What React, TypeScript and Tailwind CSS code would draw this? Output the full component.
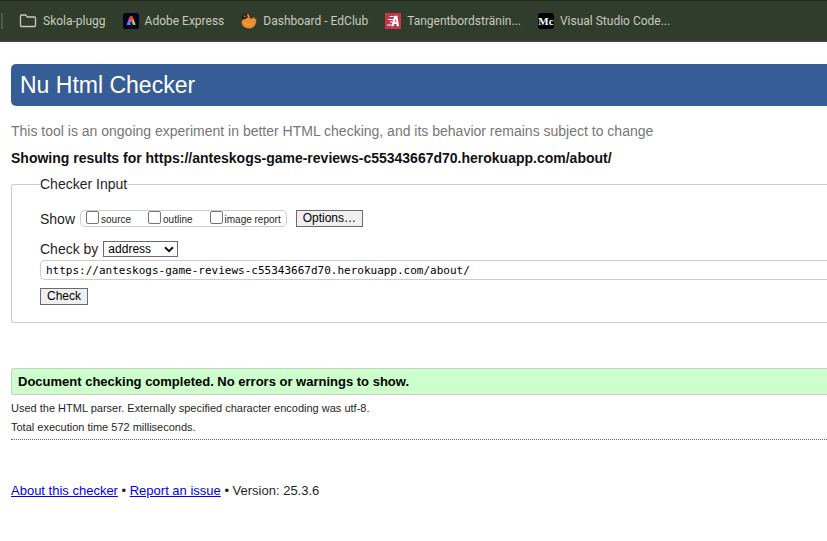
import type { ReactNode } from "react";

const barFont = "font-['Roboto','Noto_Sans',sans-serif]";
const pageFont = "font-['Liberation_Sans',Arial,sans-serif]";

function FolderIcon() {
  return (
    <svg width="18" height="16" viewBox="0 0 18 16" fill="none" aria-hidden="true">
      <path
        d="M1.5 3c0-.7.4-1 1-1h4l2 2h7c.6 0 1 .4 1 1v7.500c0 .6-.4 1-1 1h-13c-.6 0-1-.4-1-1z"
        stroke="#c9cbbd"
        strokeWidth="1.300"
      />
    </svg>
  );
}

function AdobeIcon() {
  return (
    <svg width="16" height="16" viewBox="0 0 16 16" aria-hidden="true">
      <defs>
        <linearGradient id="adobeRainbow" x1="0" y1="1" x2="1" y2="0.6">
          <stop offset="0" stopColor="#b45cff" />
          <stop offset="0.35" stopColor="#5a7bff" />
          <stop offset="0.65" stopColor="#3fd07a" />
          <stop offset="0.85" stopColor="#ffd23a" />
          <stop offset="1" stopColor="#ff8a1f" />
        </linearGradient>
        <linearGradient id="adobeTop" x1="0" y1="0" x2="0" y2="1">
          <stop offset="0" stopColor="#ff2a1f" />
          <stop offset="0.4" stopColor="#ff3a50" />
          <stop offset="0.8" stopColor="#ff3a90" stopOpacity="0" />
        </linearGradient>
      </defs>
      <rect width="16" height="16" rx="2.5" fill="#02031c" />
      <path
        d="M6.600 4c.2-.6.6-.8 1.100-.8h.9c.5 0 .9.3 1.100.8l2.700 7c.2.6-.1 1.100-.7 1.100h-1.100c-.5 0-.8-.3-1-.7L8.200 8l-1.200 2.600h1l-.5 1.500H4.600c-.6 0-.9-.5-.7-1.100z"
        fill="url(#adobeRainbow)"
      />
      <path
        d="M6.600 4c.2-.6.6-.8 1.100-.8h.9c.5 0 .9.3 1.100.8l1.800 4.600-1.900 1L8.200 8l-1.200 2.600-2.300-1.700z"
        fill="url(#adobeTop)"
      />
    </svg>
  );
}

function BirdIcon() {
  return (
    <svg width="16" height="16" viewBox="0 0 16 16" aria-hidden="true">
      <path
        d="M2 3 5.500 1c2 0 3 1.200 3 2.800.1 1.500 1.200 2.200 2.500 1.800 1-.3 1.600-.9 2-1.600.7.700.9 1.300.7 2 .8-.2 1.300-.1 1.800.3-.2.8-.5 1.300-1 1.700.5.300.9.600 1.100 1-.8.500-.8 1.600-1.300 2.600-.9 2.300-2.900 3.900-5.600 3.900C4.400 15.500 1 13.300.7 9.800.6 8.200 1.300 7 2.300 6.200z"
        fill="#f08a2c"
      />
      <path d="M2.500 8.500c2 2.700 6 3.200 10 1-1.500 3.600-8.500 4-10-1z" fill="#fdac44" />
      <path d="M.2 4.800 2.200 1.600 5.800.8l1 3.600-3.800 2z" fill="#1d1c16" />
      <path d="M2.800 2.600h1.700V4H2.800z" fill="#e9892d" />
    </svg>
  );
}

function TypingIcon() {
  return (
    <svg width="16" height="16" viewBox="0 0 16 16" aria-hidden="true">
      <rect width="16" height="16" fill="#c5344b" />
      <path d="M4.500 3.500h4M3 6.500h5M5 9h2.500M2 12h4.500" stroke="#fff" strokeWidth="1" />
      <path
        d="M6.300 13.300 9.300 2.800h3l1.800 10.500h-2.400l-.3-2.300H9.300l-.7 2.300zm3.500-4.200h1.400l-.4-3.500z"
        fill="#fff"
        fillRule="evenodd"
      />
    </svg>
  );
}

function MonogramIcon() {
  return (
    <span
      aria-hidden="true"
      className="flex h-4 w-4 items-center justify-center rounded-[3px] bg-black font-['Liberation_Serif',serif] text-[11px] leading-4 font-bold text-white"
    >
      Mc
    </span>
  );
}

function Bookmark({ icon, children }: { icon: ReactNode; children: ReactNode }) {
  return (
    <a href="#" className="flex shrink-0 items-center gap-[6px]">
      {icon}
      <span>{children}</span>
    </a>
  );
}

function ShowOption({ id, label }: { id: string; label: string }) {
  return (
    <span className="flex items-start gap-[2px]">
      <input
        id={id}
        type="checkbox"
        className="h-[13px] w-[13px] appearance-none rounded-[2px] border border-[#767676] bg-white checked:bg-[#0075ff]"
      />
      <label htmlFor={id} className="pt-[2px] text-[10px] leading-[14px]">
        {label}
      </label>
    </span>
  );
}

const buttonStyle =
  "h-[17px] border border-[#6b6b6b] bg-[#efefef] px-[6px] text-[12px] leading-[15px] text-black";

export default function App() {
  return (
    <div className={`min-h-screen overflow-hidden bg-white text-[#1f1f1f] ${pageFont}`}>
      <nav
        aria-label="Bookmarks"
        className={`flex h-[42px] items-center border-t border-b border-t-[#1f2c1c] border-b-[#4a4f49] bg-[#303d2d] text-[12px] text-[#c9cbbd] ${barFont}`}
      >
        <span className="mr-4 ml-px h-4 w-[2px] bg-[#4a5a45]" />
        <div className="flex items-center gap-[17px]">
          <Bookmark icon={<FolderIcon />}>Skola-plugg</Bookmark>
          <Bookmark icon={<AdobeIcon />}>Adobe Express</Bookmark>
          <Bookmark icon={<BirdIcon />}>Dashboard - EdClub</Bookmark>
          <Bookmark icon={<TypingIcon />}>Tangentbordstränin...</Bookmark>
          <Bookmark icon={<MonogramIcon />}>Visual Studio Code...</Bookmark>
        </div>
      </nav>

      <main className="pt-[22px] pl-[11px]">
        <h1 className="rounded-l-[5px] bg-[#365d95] px-[9px] text-[23px] leading-[42px] text-white">
          Nu Html Checker
        </h1>
        <p className="mt-4 text-[14px] leading-[18px] text-[#767676]">
          This tool is an ongoing experiment in better HTML checking, and its behavior remains subject to change
        </p>
        <h2 className="mt-[9px] text-[14px] leading-[18px] font-bold text-[#111]">
          Showing results for https://anteskogs-game-reviews-c55343667d70.herokuapp.com/about/
        </h2>

        <form className="mt-[9px]" onSubmit={(event) => event.preventDefault()}>
          <fieldset className="rounded-l-[3px] border border-r-0 border-[#ccc] pb-[17px] pl-7">
            <legend className="text-[14px] leading-4">Checker Input</legend>

            <div className="mt-[18px] flex items-center">
              <span className="text-[14px] leading-4">Show</span>
              <div className="ml-[5px] flex h-[17px] items-start gap-[17px] rounded-[5px] border border-[#ccc] px-[5px]">
                <ShowOption id="source" label="source" />
                <ShowOption id="outline" label="outline" />
                <ShowOption id="image-report" label="image report" />
              </div>
              <button type="button" className={`ml-[9px] ${buttonStyle}`}>
                Options…
              </button>
            </div>

            <div className="mt-[14px] flex items-center">
              <label htmlFor="method" className="text-[14px] leading-4">
                Check by
              </label>
              <span className="relative ml-[5px] flex">
                <select
                  id="method"
                  defaultValue="address"
                  className="h-4 w-[75px] appearance-none border border-[#6b6b6b] bg-white pl-1 text-[12px] leading-[14px] text-black"
                >
                  <option value="address">address</option>
                  <option value="upload">file upload</option>
                  <option value="text">text input</option>
                </select>
                <svg
                  width="10"
                  height="7"
                  viewBox="0 0 10 7"
                  fill="none"
                  aria-hidden="true"
                  className="pointer-events-none absolute top-[5px] right-1"
                >
                  <path d="M1 1.200 5 5.200 9 1.200" stroke="#111" strokeWidth="2" />
                </svg>
              </span>
            </div>

            <input
              type="text"
              aria-label="Address"
              defaultValue="https://anteskogs-game-reviews-c55343667d70.herokuapp.com/about/"
              className="mt-[3px] block h-5 w-full rounded-l-[5px] border border-r-0 border-[#ccc] bg-white px-[5px] font-['DejaVu_Sans_Mono',monospace] text-[11px] text-black"
            />
            <button type="submit" className={`mt-2 block ${buttonStyle}`}>
              Check
            </button>
          </fieldset>
        </form>

        <p className="mt-[45px] rounded-l-[3px] border border-r-0 border-[#ccc] bg-[#cfc] px-[6px] text-[13px] leading-[25px] font-bold text-black">
          Document checking completed. No errors or warnings to show.
        </p>
        <p className="mt-1 text-[11px] leading-[19px]">
          Used the HTML parser. Externally specified character encoding was utf-8.
        </p>
        <p className="text-[11px] leading-[19px]">Total execution time 572 milliseconds.</p>
        <hr className="mt-[2px] border-t border-dotted border-[#666]" />

        <footer className="mt-[42px] text-[13px] leading-[18px]">
          <a href="#" className="text-[#0000ee] underline">
            About this checker
          </a>
          {" • "}
          <a href="#" className="text-[#0000ee] underline">
            Report an issue
          </a>
          {" • Version: 25.3.6"}
        </footer>
      </main>
    </div>
  );
}
